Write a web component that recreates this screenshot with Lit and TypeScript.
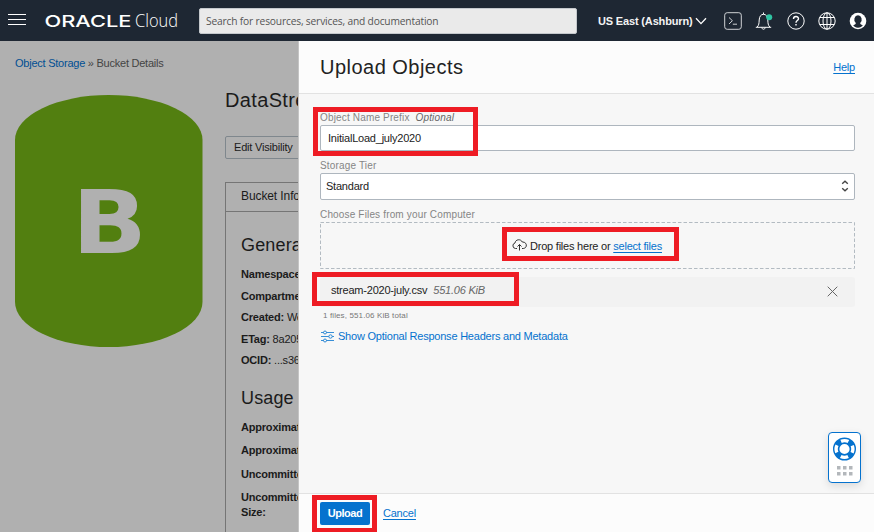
import { LitElement, html, css, svg } from "lit";
import { customElement } from "lit/decorators.js";

@customElement("cloud-header")
class CloudHeader extends LitElement {
  static styles = css`
    :host { display: flex; align-items: center; height: 41px; box-sizing: border-box; background: #1e2733; color: #fff; padding-left: 8px; }
    svg { display: block; flex: none; }
    .menu { display: grid; gap: 4px; width: 18px; flex: none; margin-bottom: 2px; }
    .menu i { height: 1px; background: #fff; }
    .logo { margin-left: 18px; }
    .search { width: 378px; height: 26px; box-sizing: border-box; flex: none; margin-left: 15px; border: 1px solid #c4c8cc; border-radius: 2px; background: #eaeaea; color: #555; font: 11.5px/24px "Open Sans", sans-serif; padding-left: 6px; white-space: nowrap; }
    .search span { display: inline-block; transform: scaleX(0.89); transform-origin: left; letter-spacing: -0.2px; }
    .region { margin-left: 21px; width: 95px; font: bold 11px/16px "Liberation Sans", sans-serif; letter-spacing: -0.16px; white-space: nowrap; color: #f3f3f3; }
    .chev { margin-left: 2px; }
    .icons { display: flex; align-items: center; margin-left: 17px; gap: 13.3px; }
  `;
  render() {
    return html`
      <div class="menu"><i></i><i></i><i></i></div>
      <svg class="logo" width="140" height="30" viewBox="0 0 140 30" fill="#fff">
        <text x="0" y="20.5" font-family="Inter, sans-serif" font-weight="500" font-size="16" textLength="87" lengthAdjust="spacingAndGlyphs" transform="translate(.5 0)">ORACLE</text>
        <text x="91" y="20.5" font-family="Open Sans, sans-serif" font-weight="300" font-size="17.5" textLength="43" lengthAdjust="spacingAndGlyphs">Cloud</text>
      </svg>
      <div class="search"><span>Search for resources, services, and documentation</span></div>
      <div class="region">US East (Ashburn)</div>
      <svg class="chev" width="12" height="8" viewBox="0 0 12 8" fill="none" stroke="#fff" stroke-width="1.3"><path d="M1 1.2 6 6.6 11 1.2"/></svg>
      <div class="icons">
        <svg width="18" height="18" viewBox="0 0 18 18" fill="none" stroke="#d0d3d6"><rect x=".7" y=".7" width="16.6" height="16.6" rx="2.5"/><path d="m5 5.5 3.4 3.2L5 12M8.8 12.2h4.2"/></svg>
        <svg width="18" height="18" viewBox="0 0 18 18" fill="none" stroke="#fff"><path d="M.8 15.3h15.4M2.2 15c1.8-2 1.8-3.5 2-7C4.4 4.3 6 2.3 8.5 2.3s4.1 2 4.3 5.7c.2 3.5.2 5 2 7M8.5 2.3V.5M6.8 15.5c.2 2.3 3.2 2.3 3.4 0"/><circle cx="14.2" cy="5.3" r="3" fill="#2fc4a3" stroke="none"/></svg>
        <svg width="18" height="18" viewBox="0 0 18 18" fill="none" stroke="#fff"><circle cx="9" cy="9" r="8.2"/><path stroke-width="1.4" d="M6.5 7c0-3.2 5-3.2 5-.3C11.5 8.6 9 8.5 9 10.7M9 12v1.5"/></svg>
        <svg width="18" height="18" viewBox="0 0 18 18" fill="none" stroke="#fff"><circle cx="9" cy="9" r="8.2"/><ellipse cx="9" cy="9" rx="4" ry="8.2"/><path d="M9 1v16M1.7 5.5h14.6M1.7 12.5h14.6"/></svg>
        <svg width="18" height="18" viewBox="0 0 18 18"><circle cx="9" cy="9" r="8.3" fill="#fff"/><path fill="#1e2733" d="M9 3.3a3.9 4.3 0 0 1 2.2 7.7c0 1 .6 1.6 2.6 2.3-1 1.6-2.500 2.400-4.800 2.400s-3.800-.8-4.800-2.400c2-.7 2.600-1.300 2.600-2.300A3.900 4.300 0 0 1 9 3.300z"/></svg>
      </div>`;
  }
}

@customElement("bucket-page")
class BucketPage extends LitElement {
  static styles = css`
    :host { display: flex; width: 299px; height: 491px; box-sizing: border-box; overflow: hidden; background: #b0b0b0; color: #1b1b1b; border-right: 1px solid #c4c4c4; font-family: "Liberation Sans", sans-serif; font-size: 11px; letter-spacing: -0.2px; white-space: nowrap; }
    .left { width: 225px; flex: none; padding-left: 15px; box-sizing: border-box; }
    .crumb { padding-top: 14px; line-height: 17px; height: 40px; color: #444; letter-spacing: -0.24px; }
    .crumb a { color: #004f93; }
    svg { display: block; }
    .right { flex: none; width: 240px; }
    h1 { margin: 45px 0 0; font-size: 20px; font-weight: 400; line-height: 28px; letter-spacing: 0.35px; }
    .btn { margin-top: 22px; width: 120px; height: 23px; box-sizing: border-box; border: 1px solid #7f878d; border-radius: 2px; line-height: 21px; padding-left: 8px; }
    .card { margin-top: 23px; border: 1px solid #757575; height: 400px; }
    .tab { height: 28px; line-height: 27px; padding-left: 15px; border-bottom: 1px solid #757575; font-size: 12px; letter-spacing: -0.1px; }
    .info { padding-left: 15px; }
    h2 { margin: 20px 0 6px; font-size: 18px; line-height: 26px; font-weight: 400; letter-spacing: 0.15px; }
    .row { height: 21.5px; line-height: 21px; }
    .info h2.usage { margin: 13px 0 5px; }
    .use { height: 23.5px; line-height: 23px; font-weight: 700; }
    .size { line-height: 15px; margin-top: -5px; font-weight: 700; }
  `;
  render() {
    const rows = [["Namespace:", ""], ["Compartment:", ""], ["Created:", "Wed"], ["ETag:", "8a205f"], ["OCID:", "...s36q"]];
    return html`
      <div class="left">
        <div class="crumb"><a>Object Storage</a> » Bucket Details</div>
        <svg width="188" height="252" viewBox="0 0 188 252">
          <path fill="#527f10" d="M0 45A93.75 45 0 0 1 187.5 45V207A93.75 45 0 0 1 0 207z"/>
          <text transform="translate(57 158) scale(1.13 1)" fill="#b0b0b0" font-family="DejaVu Sans, sans-serif" font-weight="700" font-size="87">B</text>
        </svg>
      </div>
      <div class="right">
        <h1>DataStream</h1>
        <div class="btn">Edit Visibility</div>
        <div class="card">
          <div class="tab">Bucket Information</div>
          <div class="info">
            <h2>General</h2>
            ${rows.map(([k, v]) => html`<div class="row"><b>${k}</b> ${v}</div>`)}
            <h2 class="usage">Usage</h2>
            <div class="use">Approximate Count:</div>
            <div class="use">Approximate Size:</div>
            <div class="use">Uncommitted Count:</div>
            <div class="use">Uncommitted</div>
            <div class="size">Size:</div>
          </div>
        </div>
      </div>`;
  }
}

@customElement("upload-panel")
class UploadPanel extends LitElement {
  static styles = css`
    :host { display: flex; flex-direction: column; width: 575px; height: 491px; background: #f7f7f7; color: #222; font: 11px "Liberation Sans", sans-serif; letter-spacing: -0.22px; white-space: nowrap; }
    svg { display: block; flex: none; }
    a { color: #0572ce; text-decoration: underline; text-underline-offset: 2px; }
    header { height: 53px; box-sizing: border-box; background: #fcfcfc; border-bottom: 1px solid #e2e2e2; display: flex; justify-content: space-between; align-items: center; padding: 0 19px 0 21px; }
    h1 { margin: 0; font-size: 20px; font-weight: 400; letter-spacing: 0.48px; }
    main { flex: 1; padding: 16px 19px 0 21px; }
    label { display: block; height: 15px; line-height: 15px; font-size: 10px; color: #858585; letter-spacing: 0.16px; }
    label em { margin-left: 3px; color: #666; }
    .field { box-sizing: border-box; height: 26px; border: 1px solid #aeb6be; border-radius: 2px; background: #fff; display: flex; align-items: center; justify-content: space-between; padding: 0 5px 0 7px; margin-bottom: 7px; }
    .select { padding: 0 5px 1px; height: 27px; }
    .drop { height: 47px; display: flex; align-items: center; padding-left: 192px; box-sizing: border-box; gap: 3px; position: relative; }
    .dash { position: absolute; inset: 0; width: 100%; height: 100%; }
    .file { height: 30px; margin-top: 8px; background: #f2f2f2; border-radius: 3px; display: flex; align-items: center; padding: 0 17px 4px 11px; box-sizing: border-box; }
    .file em { margin-left: 6px; color: #666; flex: 1; }
    .file svg { margin-top: 3px; }
    .total { margin: 3px 0 0 3px; font-size: 8px; line-height: 12px; color: #777; letter-spacing: 0.12px; }
    .opt { display: flex; align-items: center; margin-top: 6px; gap: 4px; color: #0572ce; height: 15px; letter-spacing: -0.22px; }
    .opt svg { margin: 2px 0 0 1px; }
    footer { height: 39px; box-sizing: border-box; border-top: 1px solid #e2e2e2; background: #fcfcfc; display: flex; align-items: center; padding-left: 21px; gap: 13px; }
    .upload { width: 50px; height: 23px; border-radius: 2px; background: #0572ce; color: #fff; font-weight: 700; line-height: 23px; text-align: center; letter-spacing: -0.45px; }
  `;
  render() {
    return html`
      <header><h1>Upload Objects</h1><a>Help</a></header>
      <main>
        <label>Object Name Prefix <em>Optional</em></label>
        <div class="field">InitialLoad_july2020</div>
        <label>Storage Tier</label>
        <div class="field select">Standard
          <svg width="8" height="12" viewBox="0 0 8 12" fill="none" stroke="#444" stroke-width="1.4"><path d="M1.2 3.7 4 1.2l2.8 2.5M1.2 8.3 4 10.8l2.8-2.5"/></svg>
        </div>
        <label>Choose Files from your Computer</label>
        <div class="drop">
          <svg class="dash" fill="none" stroke="#b3bbc2"><rect x=".5" y=".5" width="534" height="46" stroke-dasharray="3.5 2"/></svg>
          <svg width="15" height="13" viewBox="0 0 15 13" fill="none" stroke="#333"><path d="M5 9.5H3.5A2.8 2.8 0 0 1 3 4C3.4.2 8.8-.4 10.3 3c5-.3 5.4 6.1 1 6.5H10M7.5 11.5V5.5M5.5 7.5l2-2 2 2"/></svg>
          <span>Drop files here or <a>select files</a></span>
        </div>
        <div class="file"><span>stream-2020-july.csv</span><em>551.06 KiB</em>
          <svg width="11" height="11" viewBox="0 0 11 11" stroke="#666"><path d="m.7.7 9.6 9.6M10.3.7.7 10.3"/></svg>
        </div>
        <div class="total">1 files, 551.06 KiB total</div>
        <div class="opt">
          <svg width="13" height="13" viewBox="0 0 13 13" fill="none" stroke="#0572ce" stroke-width=".8"><path d="M0 2.5h2.5M5.5 2.5H13M0 6.5h7.7M11.3 6.5H13M0 10.5h2.5M5.5 10.5H13"/><circle cx="4" cy="2.5" r="1.5"/><circle cx="9.5" cy="6.5" r="1.7"/><circle cx="4" cy="10.5" r="1.5"/></svg>
          <span>Show Optional Response Headers and Metadata</span>
        </div>
      </main>
      <footer><div class="upload">Upload</div><a>Cancel</a></footer>`;
  }
}

@customElement("app-root")
class AppRoot extends LitElement {
  static styles = css`
    :host { display: block; position: relative; width: 874px; height: 532px; overflow: hidden; }
    .body { display: flex; }
    .help { position: absolute; left: 828px; top: 432px; width: 33px; height: 51px; box-sizing: border-box; border: 1px solid #0572ce; border-radius: 4px; background: #fff; box-shadow: 0 3px 9px rgba(0,0,0,.12); }
    .help svg { display: block; }
    .mark { position: absolute; box-sizing: border-box; border: 5px solid #ee1c24; }
    .m1 { left: 313px; top: 107px; width: 165px; height: 49px; }
    .m2 { left: 502px; top: 227px; width: 177px; height: 34px; }
    .m3 { left: 312px; top: 272px; width: 207px; height: 34px; }
    .m4 { left: 312px; top: 495px; width: 65px; height: 38px; }
  `;
  render() {
    const dots = [8, 14, 20].flatMap((x) => [33, 39].map((y) => [x, y]));
    return html`
      <cloud-header></cloud-header>
      <div class="body"><bucket-page></bucket-page><upload-panel></upload-panel></div>
      <div class="help">
        <svg width="31" height="49" viewBox="0 0 31 49">
          <circle cx="15.5" cy="16" r="8.3" fill="none" stroke="#0572ce" stroke-width="6.4"/>
          <circle cx="15.5" cy="16" r="8.4" fill="none" stroke="#fff" stroke-width="3.4" stroke-dasharray="7.6 5.595" stroke-dashoffset="3.8"/>
          ${dots.map(([x, y]) => svg`<rect x=${x} y=${y} width="3.5" height="3.5" fill="#b3b7bb"/>`)}
        </svg>
      </div>
      ${[1, 2, 3, 4].map((n) => html`<div class="mark m${n}"></div>`)}`;
  }
}
